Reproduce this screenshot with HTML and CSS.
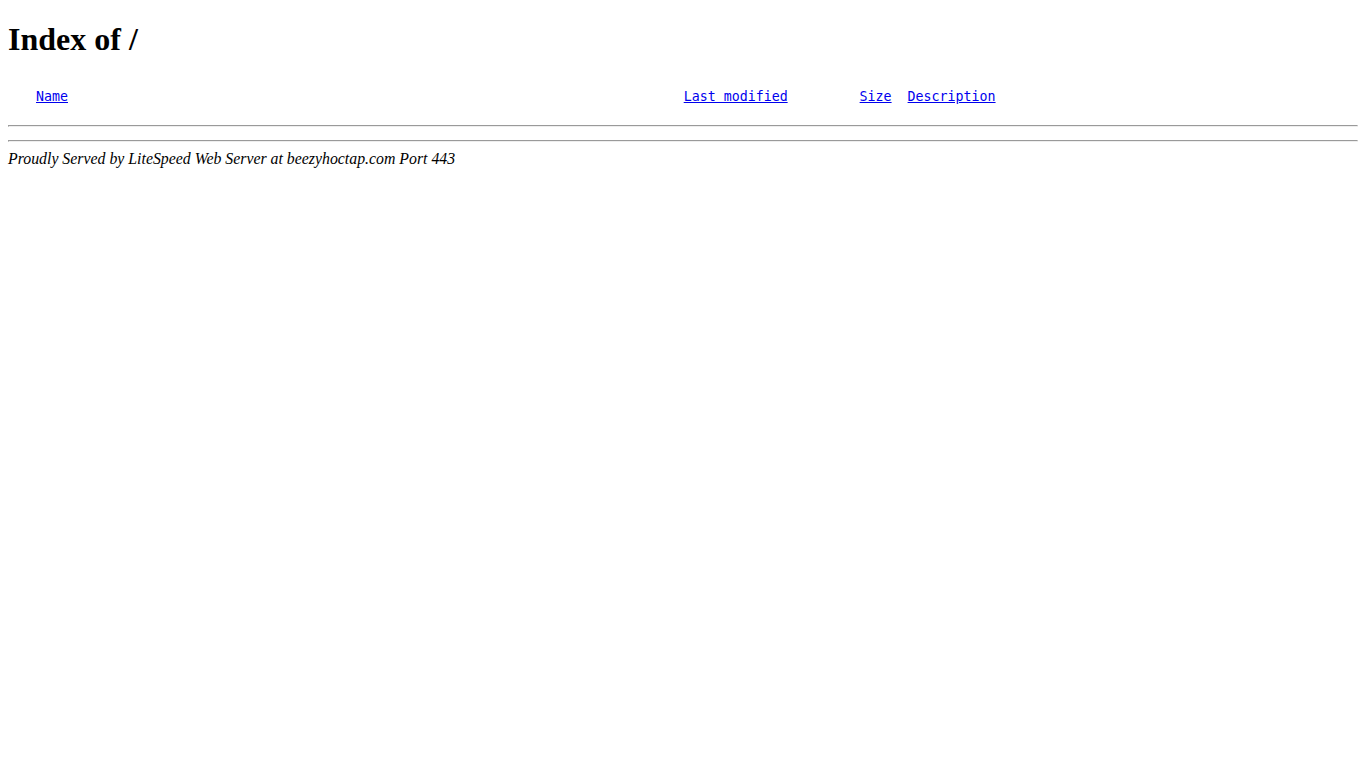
FILE: index.html
```html
<!DOCTYPE html>
<html>
<head>
	<meta charset="utf-8" />
	<title>Index of /</title>
	<link rel="stylesheet" href="styles.css">
</head>
<body>
<h1>Index of /</h1>
<pre><span class="icon"></span> <a href="?C=N;O=D">Name</a>                                                                             <a href="?C=M;O=A">Last modified</a>         <a href="?C=S;O=A">Size</a>  <a href="?C=D;O=A">Description</a>

<hr></pre><hr class="rule">
<address>Proudly Served by LiteSpeed Web Server at beezyhoctap.com Port 443</address>
</body>
</html>
```

FILE: styles.css
```css
body {
	font-family: "Liberation Serif", serif;
	margin: 0;
	padding: 0 8px 8px;
}

h1 {
	margin: 21.44px 0 20.4px;
}

pre {
	font-family: "DejaVu Sans Mono", monospace;
	font-size: 13.29px;
}

pre hr {
	margin-top: 6.4px;
}

.rule {
	margin-top: -0.6px;
}

.icon {
	display: inline-block;
	width: 20px;
	height: 22px;
}

address {
	font-size: 15.83px;
}
```
